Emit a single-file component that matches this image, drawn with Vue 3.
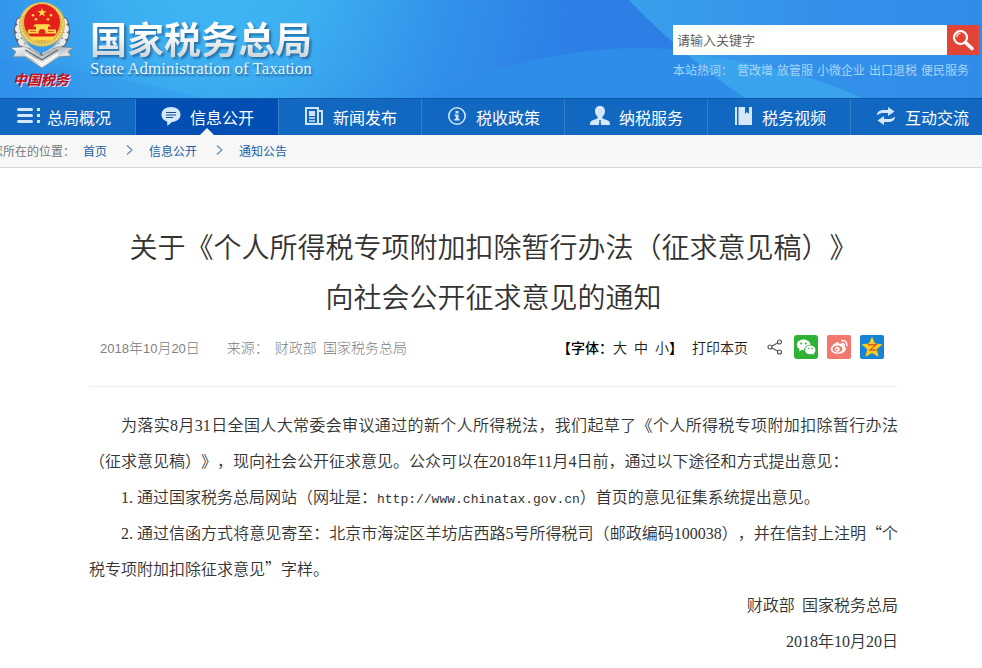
<script setup>
import { ref } from 'vue'

const keyword = ref('')
const hotWords = ['营改增', '放管服', '小微企业', '出口退税', '便民服务']

const navs = [
  { name: '总局概况', icon: 'list' },
  { name: '信息公开', icon: 'chat', active: true },
  { name: '新闻发布', icon: 'news' },
  { name: '税收政策', icon: 'info' },
  { name: '纳税服务', icon: 'user' },
  { name: '税务视频', icon: 'book' },
  { name: '互动交流', icon: 'swap' }
]

const crumbs = ['首页', '信息公开', '通知公告']

const paragraphs = [
  '为落实8月31日全国人大常委会审议通过的新个人所得税法，我们起草了《个人所得税专项附加扣除暂行办法（征求意见稿）》，现向社会公开征求意见。公众可以在2018年11月4日前，通过以下途径和方式提出意见：',
  '1.通过国家税务总局网站（网址是：http://www.chinatax.gov.cn）首页的意见征集系统提出意见。',
  '2.通过信函方式将意见寄至：北京市海淀区羊坊店西路5号所得税司（邮政编码100038），并在信封上注明“个税专项附加扣除征求意见”字样。'
]

// 把数字、序号、网址从中文里拆出来，单独设置西文字体
const split = (text) => {
  return text.split(/(http[\w:/.]+|\d\.|\d+)/).filter(Boolean).map(t => {
    let type = ''
    if (/^http/.test(t)) type = 'url'
    else if (/^\d\.$/.test(t)) type = 'order'
    else if (/^\d+$/.test(t)) type = 'num'
    return { t, type }
  })
}
</script>

<template>
  <div class="page">
    <header class="header">
      <svg class="header-bg" viewBox="0 0 982 98" preserveAspectRatio="none" aria-hidden="true">
        <defs>
          <radialGradient id="sky" gradientUnits="userSpaceOnUse" cx="215" cy="-30" r="360">
            <stop offset="0" stop-color="#3fb8f4" />
            <stop offset=".3" stop-color="#3caef1" />
            <stop offset=".65" stop-color="#3192ea" />
            <stop offset="1" stop-color="#2d7fe6" />
          </radialGradient>
          <linearGradient id="beam" x1="0" x2="1" y1="0" y2="0">
            <stop offset="0" stop-color="#38a0ec" />
            <stop offset=".45" stop-color="#3492ea" />
            <stop offset="1" stop-color="#318be8" />
          </linearGradient>
        </defs>
        <rect width="982" height="98" fill="url(#sky)" />
        <path d="M0 58Q110 74 200 98H0z" fill="#2f8fea" opacity=".3" />
        <path d="M423 98Q535 48 640 48Q760 48 860 98z" fill="#2f8dea" />
        <path d="M629 0H982V98H745Q680 54 629 0z" fill="url(#beam)" />
        <path d="M687 54Q790 65 862 98H745Q712 76 687 54z" fill="#3aa3ee" />
      </svg>

      <a class="logo" href="#" aria-label="国家税务总局">
        <span class="emblem">
          <svg width="66" height="69" viewBox="0 0 66 68" preserveAspectRatio="none" aria-hidden="true">
            <defs>
              <linearGradient id="silver" x1="0" x2="1" y1="0" y2="1">
                <stop offset="0" stop-color="#ffffff" />
                <stop offset=".45" stop-color="#b9bec2" />
                <stop offset=".7" stop-color="#f3f3f1" />
                <stop offset="1" stop-color="#777c80" />
              </linearGradient>
            </defs>
            <g fill="none" stroke-linecap="round">
              <path d="M12 21C6 35 14 48 30 56M56 21C62 35 54 48 36 56" stroke="#5c656b" stroke-width="8" />
              <path d="M12 21C6 35 14 48 30 56M56 21C62 35 54 48 36 56" stroke="#e9ecec" stroke-width="6" stroke-dasharray="1 6" />
              <path d="M15 23C10 35 18 46 31 53M53 23C58 35 50 46 35 53" stroke="#c3c8ca" stroke-width="2" />
            </g>
            <path d="M3 47L17 46L34 55L50 46L65 47L60 51L63 55L51 56L34 67L17 56L5 56L8 51z" fill="url(#silver)" stroke="#7f878c" stroke-width=".7" />
            <path d="M17 49L34 59L50 49" fill="none" stroke="#5f676c" stroke-width="1.2" />
            <path d="M17 53L34 63L50 53" fill="none" stroke="#fff" stroke-width="1.6" />
            <ellipse cx="34" cy="24" rx="23" ry="22" fill="#d8b94f" />
            <ellipse cx="34" cy="24" rx="21" ry="20" fill="none" stroke="#f3df84" stroke-width="1.6" stroke-dasharray="2 1" />
            <circle cx="34" cy="22" r="18" fill="#e5201b" />
            <path d="M34 8l1.200 3h3.200l-2.600 2 1 3.100-2.800-1.900-2.800 1.900 1-3.100-2.600-2h3.200z" fill="#ffe14d" />
            <g fill="#ffd94a">
              <circle cx="25" cy="15" r="1.300" />
              <circle cx="43" cy="15" r="1.300" />
              <circle cx="28" cy="19" r="1.300" />
              <circle cx="40" cy="19" r="1.300" />
              <path d="M27 24h14l2 2h-3v3h8v4H20v-4h8v-3h-3z" />
              <path d="M21 36h26l-3 4H24z" />
            </g>
            <path d="M31 33v-2a3 2 0 0 1 6 0v2zM22 31h6M40 31h6" fill="#e5201b" stroke="#d33b1c" stroke-width=".8" />
          </svg>
          <span class="seal">中国税务</span>
        </span>
        <span class="site">
          <span class="site-cn">国家税务总局</span>
          <span class="site-en">State Administration of Taxation</span>
        </span>
      </a>

      <div class="search">
        <form class="search-form" @submit.prevent>
          <input v-model="keyword" type="text" aria-label="请输入关键字" placeholder="请输入关键字">
          <button type="submit" aria-label="搜索">
            <svg width="32" height="30" viewBox="0 0 32 30">
              <circle cx="13.500" cy="12.500" r="6.500" fill="none" stroke="#fff" stroke-width="2.200" />
              <path d="M10 12a3.500 3.500 0 0 1 3.500-3.500" fill="none" stroke="#fff" stroke-width="1.200" />
              <path d="M18.500 17.500L25 23.500" stroke="#fff" stroke-width="3.600" stroke-linecap="round" />
            </svg>
          </button>
        </form>
        <p class="hot">
          <span>本站热词：</span>
          <a v-for="w in hotWords" :key="w" href="#">{{ w }}</a>
        </p>
      </div>
    </header>

    <nav class="nav">
      <a v-for="n in navs" :key="n.name" href="#" :class="['nav-item', { active: n.active }]">
        <svg class="nav-icon" width="24" height="24" viewBox="0 0 24 24" aria-hidden="true">
          <g v-if="n.icon === 'list'" fill="#d5e8fb">
            <rect x="1" y="3" width="16" height="3" rx="1.500" />
            <rect x="1" y="9" width="16" height="3" rx="1.500" />
            <rect x="1" y="15" width="16" height="3" rx="1.500" />
            <path d="M21 3h3v3h-3zM21 9h3v3h-3zM21 15h3v3h-3z" />
          </g>
          <g v-else-if="n.icon === 'chat'">
            <path d="M12 2c5.500 0 9.500 3 9.500 7.500S18 16.500 13 17l-4.500 4-.500-4.500C4.500 15.500 2.500 13 2.500 9.500 2.500 5 6.500 2 12 2z" fill="#d5e8fb" />
            <path d="M7 7.500h10M7 10h10M7 12.500h7" stroke="#1c4f96" stroke-width="1.200" />
          </g>
          <g v-else-if="n.icon === 'news'" fill="none" stroke="#cfe4f9" stroke-width="2">
            <path d="M4 3h12v16H4zM16 6h4v13h-4" />
            <path d="M7 6h6v5H7z" fill="#cfe4f9" stroke="none" />
            <path d="M7 13h6M7 16h6" stroke-width="1.400" />
          </g>
          <g v-else-if="n.icon === 'info'">
            <circle cx="12" cy="11" r="8.200" fill="none" stroke="#cfe4f9" stroke-width="1.600" />
            <path d="M10.500 6h3v2.400h-3zM9.500 9.500h4V14h1.200v1.500H9.300V14h1.400v-3H9.500z" fill="#cfe4f9" />
          </g>
          <path v-else-if="n.icon === 'user'" d="M12 1c3 0 5 2 5 5 0 2.500-1 4.500-2.500 5.500v2l5.500 2c1.500.700 2 2 2 4.500H2c0-2.500.500-3.800 2-4.500l5.500-2v-2C8 10.500 7 8.500 7 6c0-3 2-5 5-5zM11 15l.500 1.500L10.800 20h2.400l-.700-3.500L13 15z" fill="#d5e8fb" fill-rule="evenodd" />
          <path v-else-if="n.icon === 'book'" d="M4 2h2v18H4zM7.500 2H14v7l2-2 2 2V2h3v18H7.500z" fill="#d5e8fb" />
          <g v-else fill="#d5e8fb">
            <path d="M3 10.500C3 6.500 6 5 10 5h4V2l6.500 4.500L14 11V8h-4c-3 0-5 .500-7 2.500z" />
            <path d="M21 11.500c0 4-3 5.500-7 5.500h-4v3l-6.500-4.500L10 11v3h4c3 0 5-.500 7-2.500z" />
          </g>
        </svg>
        <span>{{ n.name }}</span>
      </a>
    </nav>

    <div class="crumbs">
      <span class="crumbs-label">您所在的位置：</span>
      <template v-for="(c, i) in crumbs" :key="c">
        <svg v-if="i > 0" class="arrow" width="42" height="12" viewBox="0 0 42 12" aria-hidden="true">
          <path d="M20 1.500l5 4.500-5 4.500" fill="none" stroke="#5c8fc4" stroke-width="1.200" />
        </svg>
        <a href="#">{{ c }}</a>
      </template>
    </div>

    <main class="article">
      <h1>关于《个人所得税专项附加扣除暂行办法（征求意见稿）》<br>向社会公开征求意见的通知</h1>

      <div class="meta">
        <span class="date"><span v-for="(s, i) in split('2018年10月20日')" :key="i" :class="s.type">{{ s.t }}</span></span>
        <span class="source"><span>来源：</span><span>财政部&nbsp; 国家税务总局</span></span>
        <div class="tools">
          <span class="font-size"><b>【字体：</b><button type="button">大</button><button type="button">中</button><button type="button">小</button><b>】</b></span>
          <button type="button" class="print">打印本页</button>
          <a class="share" href="#" aria-label="分享">
            <svg width="16" height="16" viewBox="0 0 16 16">
              <g fill="none" stroke="#555" stroke-width="1.200">
                <circle cx="3" cy="8" r="2" />
                <circle cx="12.500" cy="3" r="2" />
                <circle cx="12.500" cy="13" r="2" />
                <path d="M4.800 7L10.700 4M4.800 9l5.900 3" />
              </g>
            </svg>
          </a>
          <a href="#" aria-label="微信">
            <svg width="24" height="24" viewBox="0 0 24 24">
              <rect width="24" height="24" rx="3" fill="#2fb135" />
              <path d="M9.500 4.500c4 0 6.800 2.400 7 5.200-3.500 0-6.500 2.300-6.500 5.600l-2.400-.200L5 16.500l.600-2.400C3.800 13 2.800 11.500 2.800 9.800c0-3 3-5.300 6.700-5.300z" fill="#fff" />
              <path d="M16.300 10.500c3 0 5.200 2 5.200 4.400 0 1.400-.700 2.500-1.900 3.400l.400 1.800-2-1c-3.800.700-7-1.300-7-4.200 0-2.400 2.300-4.400 5.300-4.400z" fill="#fff" />
              <g fill="#2fb135">
                <circle cx="7.200" cy="8.500" r="1" />
                <circle cx="11.800" cy="8.500" r="1" />
                <circle cx="14.500" cy="13.500" r=".8" />
                <circle cx="18" cy="13.500" r=".8" />
              </g>
            </svg>
          </a>
          <a href="#" aria-label="微博">
            <svg width="24" height="24" viewBox="0 0 24 24">
              <rect width="24" height="24" rx="2" fill="#f2776c" />
              <path d="M9.500 7.500c1.800-.800 3.200-.200 2.800 1.800 2.500-1 4.600-.500 4 1.700 1.800.600 2.700 1.700 2.500 3.200-.400 2.700-4 4.600-8 4.600s-7-1.800-7-4.500c0-2.400 2.800-5.600 5.700-6.800z" fill="#fff" />
              <ellipse cx="10.500" cy="14" rx="5" ry="3.400" fill="#f2776c" />
              <circle cx="10.200" cy="14.200" r="2.500" fill="#fff" />
              <circle cx="9.600" cy="14.600" r="1" fill="#f2776c" />
              <path d="M15 8.500c1.500-.300 2.500.700 2.200 2.200M14.800 5.500c3.200-.600 5.800 2 5 5.300" fill="none" stroke="#fff" stroke-width="1.500" stroke-linecap="round" />
            </svg>
          </a>
          <a href="#" aria-label="QQ空间">
            <svg width="24" height="24" viewBox="0 0 24 24">
              <rect width="24" height="24" rx="2" fill="#1583d8" />
              <path d="M12 1.500l3 7 7.500.700-5.700 5 1.800 7.800L12 18l-6.600 4 1.800-7.800-5.700-5L9 8.500z" fill="#fdcb1c" />
              <path d="M8 9.800h8l-6 5.200h6.500" fill="none" stroke="#d8621c" stroke-width="1.400" />
            </svg>
          </a>
        </div>
      </div>

      <div class="content">
        <p v-for="(p, i) in paragraphs" :key="i">
          <template v-for="(s, j) in split(p)" :key="j"><span v-if="s.type" :class="s.type">{{ s.t }}</span><template v-else>{{ s.t }}</template></template>
        </p>
        <p class="sign">财政部&nbsp; 国家税务总局</p>
        <p class="sign"><span v-for="(s, i) in split('2018年10月20日')" :key="i" :class="s.type">{{ s.t }}</span></p>
      </div>
    </main>
  </div>
</template>

<style>
body {
  background: #fff;
}
</style>

<style scoped>
.page {
  overflow: hidden;
  font-family: "Noto Sans CJK SC", sans-serif;
  font-size: 12px;
  color: #333;
  text-spacing-trim: space-all;
  text-autospace: no-autospace;
}

a {
  color: inherit;
  text-decoration: none;
}

p,
h1 {
  margin: 0;
}

button {
  padding: 0;
  border: 0;
  background: none;
  font: inherit;
  color: inherit;
  cursor: pointer;
}

svg {
  display: block;
}

.header {
  position: relative;
  display: flex;
  justify-content: space-between;
  height: 98px;
}

.header-bg {
  position: absolute;
  inset: 0;
  width: 100%;
  height: 100%;
}

.logo {
  position: relative;
  display: flex;
  gap: 16px;
  padding-left: 8px;
}

.emblem {
  display: flex;
  flex-direction: column;
  align-items: center;
  width: 66px;
}

.seal {
  font-size: 14px;
  line-height: 20px;
  font-weight: bold;
  font-style: italic;
  color: #c4121a;
  text-shadow: 1px 1px 0 #e8d8ea;
}

.site {
  display: flex;
  flex-direction: column;
  padding-top: 17px;
}

.site-cn {
  font-size: 37px;
  line-height: 42px;
  font-weight: bold;
  color: transparent;
  background: linear-gradient(#fff 40%, #d3d8dc 90%);
  -webkit-background-clip: text;
  background-clip: text;
  filter: drop-shadow(2px 2px 1px rgba(20, 70, 120, 0.6));
}

.site-en {
  font-family: "Liberation Serif", serif;
  font-size: 17px;
  line-height: 20px;
  color: #e4f3fd;
  text-shadow: 1px 2px 2px rgba(20, 70, 120, 0.7);
}

.search {
  position: relative;
  width: 306px;
  margin-right: 3px;
  padding-top: 25px;
}

.search-form {
  display: flex;
  height: 30px;
}

.search-form input {
  flex: 1;
  min-width: 0;
  padding: 0 4px 2px;
  border: 0;
  outline: 0;
  background: #fff;
  font-family: inherit;
  font-size: 13px;
  font-weight: 350;
  color: #555;
}

.search-form input::placeholder {
  color: #555;
}

.search-form button {
  background: #e24536;
}

.hot {
  display: flex;
  gap: 4px;
  margin-top: 5px;
  line-height: 20px;
  white-space: nowrap;
  color: #a6d5fa;
}

/* 导航比窗口略宽，两侧各超出一点 */
.nav {
  display: flex;
  height: 36px;
  margin: 0 -12px 0 -7px;
  border-top: 1px solid #0c57a6;
  background: #1268c0;
}

.nav-item {
  position: relative;
  display: flex;
  flex: 1 0 0;
  box-sizing: border-box;
  align-items: center;
  gap: 7px;
  padding-left: 23px;
  border-right: 1px solid #3580cc;
  font-size: 16px;
  color: #fff;
}

.nav-item.active {
  background: #024eb3;
}

.nav-item.active::after {
  content: "";
  position: absolute;
  left: 50%;
  bottom: 0;
  margin-left: -7px;
  border: 7px solid transparent;
  border-top: 0;
  border-bottom-color: #f7f7f7;
}

.crumbs {
  display: flex;
  align-items: center;
  height: 30px;
  margin-left: -9px;
  padding-bottom: 2px;
  border-bottom: 1px solid #d8d8d8;
  background: #f7f7f7;
  white-space: nowrap;
  color: #1c62a8;
}

.crumbs-label {
  margin-right: 8px;
  color: #777;
}

.article {
  margin: 0 84px 0 89px;
  padding-top: 53px;
}

h1 {
  font-size: 28px;
  line-height: 50px;
  font-weight: 350;
  text-align: center;
}

.meta {
  display: flex;
  align-items: center;
  height: 52px;
  padding: 0 14px 13px 11px;
  border-bottom: 1px solid #eee;
  font-size: 14px;
  font-weight: 300;
  color: #808080;
  white-space: nowrap;
}

.meta .num {
  font-family: "Liberation Sans", sans-serif;
  font-size: 13px;
}

.source {
  display: flex;
  gap: 6px;
  margin-left: 27px;
}

.tools {
  display: flex;
  align-items: center;
  gap: 9px;
  margin-left: auto;
  font-weight: 350;
  color: #222;
}

.font-size {
  display: flex;
}

.font-size b {
  font-weight: 500;
  color: #000;
}

.font-size button + button {
  margin-left: 7px;
}

.print {
  margin-right: 10px;
}

.share {
  margin-right: 2px;
}

.content {
  margin-top: 19px;
  font-size: 16px;
  line-height: 36px;
  font-weight: 350;
  text-align: justify;
}

.content p {
  text-indent: 32px;
}

.content .sign {
  text-align: right;
}

.content .num,
.content .order {
  font-family: "Liberation Serif", serif;
  line-height: 16px;
}

.content .order {
  display: inline-block;
  width: 16px;
  text-indent: 0;
}

.content .url {
  font-family: "Liberation Mono", monospace;
  font-size: 13px;
  line-height: 16px;
}
</style>
